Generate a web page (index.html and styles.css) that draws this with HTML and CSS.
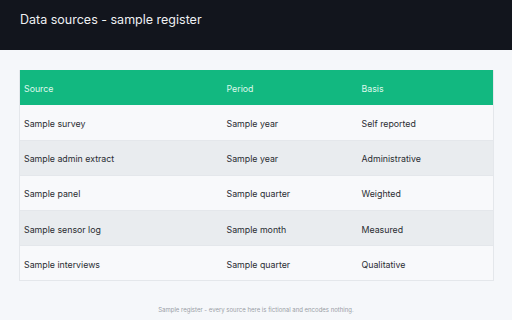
FILE: index.html
```html
<!DOCTYPE html>
<html>
<head>
<meta charset="utf-8">
<link rel="stylesheet" href="styles.css">
</head>
<body>
<header class="topbar">
  <h1 class="title">Data sources - sample register</h1>
</header>
<main class="content">
  <table class="register">
    <thead>
      <tr><th class="c1">Source</th><th class="c2">Period</th><th class="c3">Basis</th></tr>
    </thead>
    <tbody>
      <tr><td>Sample survey</td><td>Sample year</td><td>Self reported</td></tr>
      <tr><td>Sample admin extract</td><td>Sample year</td><td>Administrative</td></tr>
      <tr><td>Sample panel</td><td>Sample quarter</td><td>Weighted</td></tr>
      <tr><td>Sample sensor log</td><td>Sample month</td><td>Measured</td></tr>
      <tr><td>Sample interviews</td><td>Sample quarter</td><td>Qualitative</td></tr>
    </tbody>
  </table>
  <p class="note">Sample register - every source here is fictional and encodes nothing.</p>
</main>
</body>
</html>
```
FILE: styles.css
```css
* { box-sizing: border-box; }
html, body { margin: 0; padding: 0; }
body {
  background: #f5f7fa;
  font-family: Inter, "Noto Sans", sans-serif;
  width: 512px;
  height: 320px;
  overflow: hidden;
}
.topbar {
  background: #12151d;
  height: 50px;
  padding: 0 20px;
  display: flex;
  align-items: flex-start;
}
.title {
  margin: 12px 0 0;
  font-size: 12.5px;
  font-weight: 400;
  color: #eef0f3;
  line-height: 15px;
}
.content {
  padding: 20px 19px 0;
}
.register {
  width: 474px;
  border-collapse: collapse;
  table-layout: fixed;
  font-size: 8.8px;
  border: 1px solid #e4e7eb;
  border-top: none;
}
.c1 { width: 203px; }
.c2 { width: 135px; }
.c3 { width: 136px; }
.register th {
  background: #12b880;
  color: #dff8ec;
  font-weight: 400;
  text-align: left;
  height: 35px;
  padding: 2px 4px 0;
}
.register td {
  color: #2a2d32;
  height: 35.2px;
  padding: 2px 4px 0;
  border-bottom: 1px solid #e4e7eb;
}
.register tbody tr:nth-child(odd) { background: #f8f9fb; }
.register tbody tr:nth-child(even) { background: #e9ecef; }
.note {
  margin: 25px 0 0;
  text-align: center;
  font-size: 6px;
  color: #9a9ea6;
}
```
